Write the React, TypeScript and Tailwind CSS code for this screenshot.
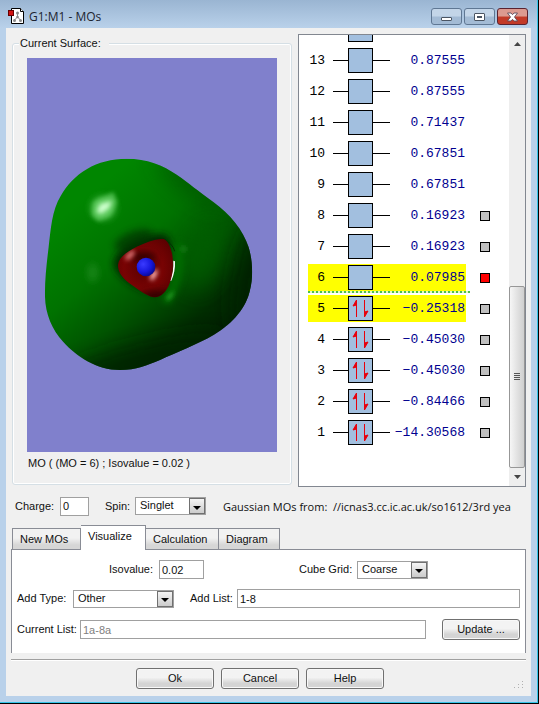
import { useState } from "react";
import type { ReactNode } from "react";

type Orbital = {
	id: number;
	energy: string;
	occupied?: boolean;
	highlighted?: boolean;
	toggle?: boolean;
};

const orbitals: Orbital[] = [
	{ id: 14, energy: "" },
	{ id: 13, energy: "0.87555" },
	{ id: 12, energy: "0.87555" },
	{ id: 11, energy: "0.71437" },
	{ id: 10, energy: "0.67851" },
	{ id: 9, energy: "0.67851" },
	{ id: 8, energy: "0.16923", toggle: true },
	{ id: 7, energy: "0.16923", toggle: true },
	{ id: 6, energy: "0.07985", toggle: true, highlighted: true },
	{ id: 5, energy: "−0.25318", toggle: true, highlighted: true, occupied: true },
	{ id: 4, energy: "−0.45030", toggle: true, occupied: true },
	{ id: 3, energy: "−0.45030", toggle: true, occupied: true },
	{ id: 2, energy: "−0.84466", toggle: true, occupied: true },
	{ id: 1, energy: "−14.30568", toggle: true, occupied: true },
];

const tabs = [
	{ name: "New MOs", width: "w-[69px]" },
	{ name: "Visualize", width: "w-[65px]" },
	{ name: "Calculation", width: "w-[73px]" },
	{ name: "Diagram", width: "w-[61px]" },
];

function TitleBar() {
	return (
		<header className="flex h-7 items-center bg-linear-to-b from-[#9ab5d2] to-[#b9d1ea] pr-[9px] pl-2">
			<svg width="17" height="17" viewBox="0 0 17 17" className="mt-1">
				<path d="M3.500 0.500h9l3 3v12h-12z" fill="#fff" stroke="#000" />
				<path d="M12.500 0.500v3h3" fill="#fff" stroke="#000" />
				<path d="M9.500 5v5M9.500 9l-3 3M9.500 9l3 3" stroke="#888" fill="none" />
				<circle cx="9.500" cy="5" r="1.500" fill="#888" />
				<circle cx="9.500" cy="9" r="1.300" fill="#888" />
				<circle cx="6.500" cy="12.500" r="1.500" fill="#888" />
				<circle cx="12.500" cy="12.500" r="1.500" fill="#888" />
				<rect x="0.500" y="2.500" width="5" height="5" fill="#d01010" stroke="#600" />
			</svg>
			<h1 className="mt-1 ml-1 flex-1 font-['Open_Sans',sans-serif] text-[12px] text-[#1c2430]">
				G1:M1 - MOs
			</h1>
			<div className="mt-1 flex gap-[2px]">
				<WindowButton label="Minimize">
					<rect x="4.500" y="8.500" width="10" height="3" rx="0.500" fill="#fff" stroke="#4b5563" />
				</WindowButton>
				<WindowButton label="Maximize">
					<rect x="4.500" y="4.500" width="10" height="7" rx="0.500" fill="#fff" stroke="#4b5563" />
					<rect x="7.500" y="7.500" width="4" height="1" fill="#9ab3cf" stroke="#4b5563" />
				</WindowButton>
				<WindowButton label="Close" danger>
					<path
						d="M4.500 4h3.500l1.500 1.700L11 4h3.500L11.500 8l3 4H11L9.500 10.300 8 12H4.500L7.500 8z"
						fill="#fff"
						stroke="#5c4a5a"
						strokeWidth="0.900"
					/>
				</WindowButton>
			</div>
		</header>
	);
}

function WindowButton({ label, danger, children }: { label: string; danger?: boolean; children: ReactNode }) {
	return (
		<button
			type="button"
			aria-label={label}
			className={
				danger
					? "flex h-[17px] w-[31px] items-center justify-center rounded-[3px] border border-[#5a2330] bg-linear-to-b from-[#dc9a90] from-45% to-[#c23a28] to-55%"
					: "flex h-[17px] w-[31px] items-center justify-center rounded-[3px] border border-[#5f7793] bg-linear-to-b from-[#c3d5e8] from-45% to-[#a3bbd5] to-55%"
			}
		>
			<svg width="19" height="15" viewBox="0 0 19 15">
				{children}
			</svg>
		</button>
	);
}

function Surface() {
	return (
		<svg viewBox="0 0 250 394" className="block w-full bg-[#8080cc]" role="img" aria-label="Orbital surface">
			<defs>
				<linearGradient id="lobe" gradientUnits="userSpaceOnUse" x1="130" y1="200" x2="500" y2="650">
					<stop offset="0" stopColor="#008600" />
					<stop offset="0.350" stopColor="#007200" />
					<stop offset="0.600" stopColor="#005400" />
					<stop offset="0.850" stopColor="#002c00" />
					<stop offset="1" stopColor="#002000" />
				</linearGradient>
				<radialGradient id="core" cx="0.450" cy="0.500" r="0.650">
					<stop offset="0" stopColor="#5a0000" />
					<stop offset="0.450" stopColor="#780303" />
					<stop offset="1" stopColor="#4a0000" />
				</radialGradient>
				<radialGradient id="atom" cx="0.350" cy="0.350" r="0.700">
					<stop offset="0" stopColor="#3a3aff" />
					<stop offset="0.600" stopColor="#1818dd" />
					<stop offset="1" stopColor="#080890" />
				</radialGradient>
				<filter id="soft" filterUnits="userSpaceOnUse" x="-100" y="-100" width="900" height="900">
					<feGaussianBlur stdDeviation="32" />
				</filter>
				<filter id="glow" x="-100%" y="-100%" width="300%" height="300%">
					<feGaussianBlur stdDeviation="11" />
				</filter>
				<filter id="spark" x="-100%" y="-100%" width="300%" height="300%">
					<feGaussianBlur stdDeviation="6" />
				</filter>
				<clipPath id="lobeClip">
					<path d="M290 56C350 56 400 76 440 104C480 132 500 150 550 186C600 222 640 270 656 322C668 362 670 410 660 450C650 500 610 550 552 584C500 614 440 636 390 660C350 676 320 690 270 690C200 690 140 650 100 606C66 570 46 520 45 470C44 420 50 370 56 320C62 270 66 210 92 168C130 100 200 56 290 56Z" />
				</clipPath>
				<clipPath id="coreClip">
					<path d="M396 296C412 296 422 320 427 345C431 375 430 400 419 430C410 455 392 473 372 472C345 466 322 446 296 428C276 412 264 396 264 375C266 352 290 336 320 320C346 308 370 298 396 296Z" />
				</clipPath>
			</defs>
			<g transform="translate(3 82) scale(0.33333)">
				<g clipPath="url(#lobeClip)">
					<rect x="30" y="40" width="660" height="670" fill="url(#lobe)" />
					<ellipse cx="480" cy="125" rx="120" ry="30" transform="rotate(38 480 125)" fill="#004400" opacity="0.600" filter="url(#soft)" />
					<ellipse cx="340" cy="660" rx="260" ry="40" transform="rotate(-14 340 660)" fill="#002200" opacity="0.900" filter="url(#soft)" />
					<ellipse cx="665" cy="430" rx="50" ry="180" transform="rotate(8 665 430)" fill="#002400" opacity="0.900" filter="url(#soft)" />
					<ellipse cx="520" cy="350" rx="50" ry="100" transform="rotate(20 520 350)" fill="#006000" opacity="0.700" filter="url(#soft)" />
					<path d="M250 375C250 325 340 275 408 284L430 320L380 460C330 455 270 425 250 375Z" fill="#002000" opacity="0.900" filter="url(#glow)" />
					<ellipse cx="310" cy="300" rx="60" ry="26" transform="rotate(-22 310 300)" fill="#003400" opacity="0.700" filter="url(#glow)" />
					<path d="M438 310C455 360 448 430 405 485" stroke="#006e00" strokeWidth="24" fill="none" filter="url(#glow)" />
					<path d="M400 296C418 306 430 318 434 334" stroke="#003000" strokeWidth="3" fill="none" />
					<ellipse cx="220" cy="204" rx="36" ry="34" fill="#4fc04f" filter="url(#glow)" />
					<path d="M186 226L192 186L250 156L262 186L240 226L206 244Z" fill="#66d066" opacity="0.700" filter="url(#spark)" />
					<path d="M200 214L210 192L246 182L236 206L212 222Z" fill="#ccffcc" filter="url(#spark)" />
					<ellipse cx="188" cy="398" rx="16" ry="28" fill="#228c22" opacity="0.700" filter="url(#glow)" />
					<circle cx="461" cy="327" r="8" fill="#1e801e" filter="url(#spark)" />
					<path d="M412 470L434 450L426 468L412 484Z" fill="#30b030" filter="url(#spark)" />
				</g>
				<path d="M430 362L435 364C436 385 432 405 424 422L419 422C428 402 431 384 430 362Z" fill="#fff" />
				<g clipPath="url(#coreClip)">
					<rect x="250" y="280" width="200" height="210" fill="url(#core)" />
					<ellipse cx="342" cy="352" rx="36" ry="16" fill="#360000" filter="url(#glow)" />
					<ellipse cx="385" cy="468" rx="50" ry="16" fill="#330000" filter="url(#glow)" />
					<path d="M284 352L304 330L316 336L308 350L292 362Z" fill="#d87070" filter="url(#spark)" />
					<path d="M358 416L366 396L384 386L380 406L368 422Z" fill="#ffb0b0" filter="url(#spark)" />
				</g>
				<circle cx="348" cy="381" r="28" fill="url(#atom)" />
			</g>
		</svg>
	);
}

function OrbitalRow({ orbital }: { orbital: Orbital }) {
	const [checked, setChecked] = useState(orbital.id === 6);

	return (
		<li className="relative flex h-[31px] shrink-0 items-center pl-[9px]">
			<div className={`flex h-[27px] w-[158px] items-center ${orbital.highlighted ? "bg-[#ffff00]" : ""}`}>
				<span className="w-[17px] text-right">{orbital.energy && orbital.id}</span>
				<span className="ml-2 h-px w-[15px] bg-black" />
				<span className="flex h-[25px] w-[25px] items-center justify-center border border-black bg-[#a2bfdf]">
					{orbital.occupied && (
						<svg width="19" height="19" viewBox="0 0 19 19" fill="#e8000c" stroke="#e8000c">
							<path d="M5.500 18V1M5.500 1v5L2 7z" />
							<path d="M13.500 1v17M13.500 18v-5l3.500-1z" />
						</svg>
					)}
				</span>
				<span className="h-px w-[17px] bg-black" />
				<span className="w-[75px] text-right whitespace-nowrap text-[#000090]">{orbital.energy}</span>
			</div>
			{orbital.toggle && (
				<input
					type="checkbox"
					aria-label={`Orbital ${orbital.id}`}
					checked={checked}
					onChange={() => setChecked(!checked)}
					className="ml-[14px] h-[10px] w-[10px] appearance-none border border-black bg-[#c0c0c0] checked:bg-[#ff0000]"
				/>
			)}
			{orbital.id === 6 && (
				<span className="absolute bottom-0 left-[9px] h-[2px] w-[162px] bg-[repeating-linear-gradient(90deg,#4cc04c_0_2px,#e8f8c0_2px_4px)]" />
			)}
		</li>
	);
}

function OrbitalList() {
	return (
		<section className="flex h-[453px] w-[228px] shrink-0 border border-[#828790] bg-white">
			<ul className="flex flex-1 flex-col justify-end overflow-hidden pb-[38px] font-['Liberation_Mono',monospace] text-[13px] text-black">
				{orbitals.map((orbital) => (
					<OrbitalRow key={orbital.id} orbital={orbital} />
				))}
			</ul>
			<div className="flex w-4 flex-col bg-[#eeeeee]">
				<button type="button" aria-label="Scroll up" className="flex h-[18px] items-center justify-center">
					<svg width="7" height="4" viewBox="0 0 7 4">
						<path d="M0 4L3.500 0L7 4z" fill="#444" />
					</svg>
				</button>
				<div className="flex flex-1 flex-col justify-end">
					<div className="flex h-[182px] items-center justify-center rounded-[2px] border border-[#979797] bg-linear-to-r from-[#f6f6f6] to-[#cfcfcf]">
						<svg width="6" height="8" viewBox="0 0 6 8" fill="#555">
							<path d="M0 0h6v1H0zM0 2h6v1H0zM0 4h6v1H0zM0 6h6v1H0z" />
						</svg>
					</div>
				</div>
				<button type="button" aria-label="Scroll down" className="flex h-[18px] items-center justify-center">
					<svg width="7" height="4" viewBox="0 0 7 4">
						<path d="M0 0L3.500 4L7 0z" fill="#444" />
					</svg>
				</button>
			</div>
		</section>
	);
}

function DropDown({ id, value, options, width }: { id: string; value: string; options: string[]; width: string }) {
	return (
		<div className={`relative h-[18px] ${width}`}>
			<select
				id={id}
				defaultValue={value}
				className="block h-full w-full appearance-none border border-[#a0a0a0] bg-white pr-4 pb-px pl-1 outline-none"
			>
				{options.map((option) => (
					<option key={option}>{option}</option>
				))}
			</select>
			<span className="pointer-events-none absolute top-px right-px flex h-4 w-4 items-center justify-center border border-[#707070] bg-linear-to-b from-[#f4f4f4] to-[#cccccc]">
				<svg width="8" height="4" viewBox="0 0 8 4" className="mt-[3px]">
					<path d="M0 0h8L4 4z" fill="#000" />
				</svg>
			</span>
		</div>
	);
}

function PushButton({ children }: { children: ReactNode }) {
	return (
		<button
			type="button"
			className="h-[21px] w-[78px] shrink-0 rounded-[3px] border border-[#707070] bg-linear-to-b from-[#f3f3f3] from-45% to-[#d4d4d4] to-75% shadow-[inset_0_0_0_1px_#f8f8f8]"
		>
			{children}
		</button>
	);
}

export default function App() {
	const [activeTab, setActiveTab] = useState("Visualize");

	return (
		<div className="border-r border-b border-black bg-black font-['Liberation_Sans',Arial,sans-serif] text-[11px] leading-[15px] text-[#101010]">
			<div className="border-r border-b border-[#35c4e8] bg-[#b9d1ea]">
				<TitleBar />
				<main className="mr-[6px] mb-[6px] ml-[6px] bg-[#f0f0f0] pr-[5px] pb-[7px] pl-[5px]">
					<div className="flex gap-[6px] pt-[6px]">
						<fieldset className="mt-[2px] ml-px h-[449px] min-w-0 flex-1 rounded-[3px] border border-[#d5dfe5] px-[14px] shadow-[inset_0_0_0_1px_#ffffff]">
							<legend className="-ml-2 bg-[#f0f0f0] pr-2 pl-px">Current Surface:</legend>
							<div className="pt-[7px]">
								<Surface />
							</div>
							<p className="mt-1 ml-px">MO ( (MO = 6) ; Isovalue = 0.02 )</p>
						</fieldset>
						<OrbitalList />
					</div>

					<div className="mt-[9px] flex h-5 items-center">
						<label htmlFor="charge" className="ml-1 w-[45px] whitespace-nowrap">
							Charge:
						</label>
						<input
							id="charge"
							defaultValue="0"
							className="h-[19px] w-[29px] border border-[#a0a0a0] bg-white px-[2px]"
						/>
						<label htmlFor="spin" className="ml-4 w-[30px]">
							Spin:
						</label>
						<DropDown id="spin" value="Singlet" options={["Singlet", "Triplet"]} width="w-[71px]" />
						<p className="mr-1 ml-[17px] min-w-0 flex-1 overflow-hidden font-['Open_Sans',sans-serif] whitespace-pre">
							{"Gaussian MOs from:  //icnas3.cc.ic.ac.uk/so1612/3rd yea"}
						</p>
					</div>

					<div role="tablist" className="mt-[9px] ml-px flex h-[24px] items-end">
						{tabs.map((tab) => (
							<button
								key={tab.name}
								type="button"
								role="tab"
								aria-selected={tab.name === activeTab}
								onClick={() => setActiveTab(tab.name)}
								className={`${tab.width} border-t border-r border-[#898c95] pl-[7px] text-left whitespace-nowrap first:border-l ${
									tab.name === activeTab
										? "-mb-px h-[25px] bg-white pb-[3px]"
										: "h-[21px] bg-linear-to-b from-[#f2f2f2] from-45% to-[#d6d6d6] to-80%"
								}`}
							>
								{tab.name}
							</button>
						))}
					</div>
					<section className="flex flex-col border border-b-0 border-[#898c95] bg-white pt-[10px] pr-[5px] pb-[14px] pl-[5px]">
						<div className="flex h-[19px] items-center">
							<label htmlFor="isovalue" className="ml-[92px] w-[50px]">
								Isovalue:
							</label>
							<input
								id="isovalue"
								defaultValue="0.02"
								className="h-[19px] w-[45px] border border-[#a0a0a0] bg-white px-[2px]"
							/>
							<label htmlFor="grid" className="ml-[95px] w-[58px] whitespace-nowrap">
								Cube Grid:
							</label>
							<DropDown id="grid" value="Coarse" options={["Coarse", "Medium", "Fine"]} width="w-[71px]" />
						</div>
						<div className="mt-[10px] flex h-[19px] items-center">
							<label htmlFor="type" className="w-[56px] whitespace-nowrap">
								Add Type:
							</label>
							<DropDown id="type" value="Other" options={["Other", "HOMO", "LUMO"]} width="w-[101px]" />
							<label htmlFor="list" className="ml-4 w-[47px] whitespace-nowrap">
								Add List:
							</label>
							<input
								id="list"
								defaultValue="1-8"
								className="h-[19px] min-w-0 flex-1 border border-[#a0a0a0] bg-white px-[2px]"
							/>
						</div>
						<div className="mt-3 flex h-[19px] items-center">
							<label htmlFor="current" className="w-[63px] whitespace-nowrap">
								Current List:
							</label>
							<input
								id="current"
								defaultValue="1a-8a"
								readOnly
								className="mr-4 h-[19px] min-w-0 flex-1 border border-[#a0a0a0] bg-white px-[2px] text-[#808080]"
							/>
							<PushButton>Update ...</PushButton>
						</div>
					</section>

					<footer className="mt-[6px] flex border-t border-[#a0a0a0] pt-2 shadow-[inset_0_1px_0_#ffffff]">
						<div className="flex flex-1 justify-center gap-[7px]">
							<PushButton>Ok</PushButton>
							<PushButton>Cancel</PushButton>
							<PushButton>Help</PushButton>
						</div>
						<svg width="16" height="9" viewBox="0 0 16 9" fill="#b0b0b0" className="mr-px self-end">
							<path d="M5 7h1v1H5zM9 7h1v1H9zM13 7h1v1h-1zM9 4h1v1H9zM13 4h1v1h-1zM13 1h1v1h-1z" />
						</svg>
					</footer>
				</main>
			</div>
		</div>
	);
}
